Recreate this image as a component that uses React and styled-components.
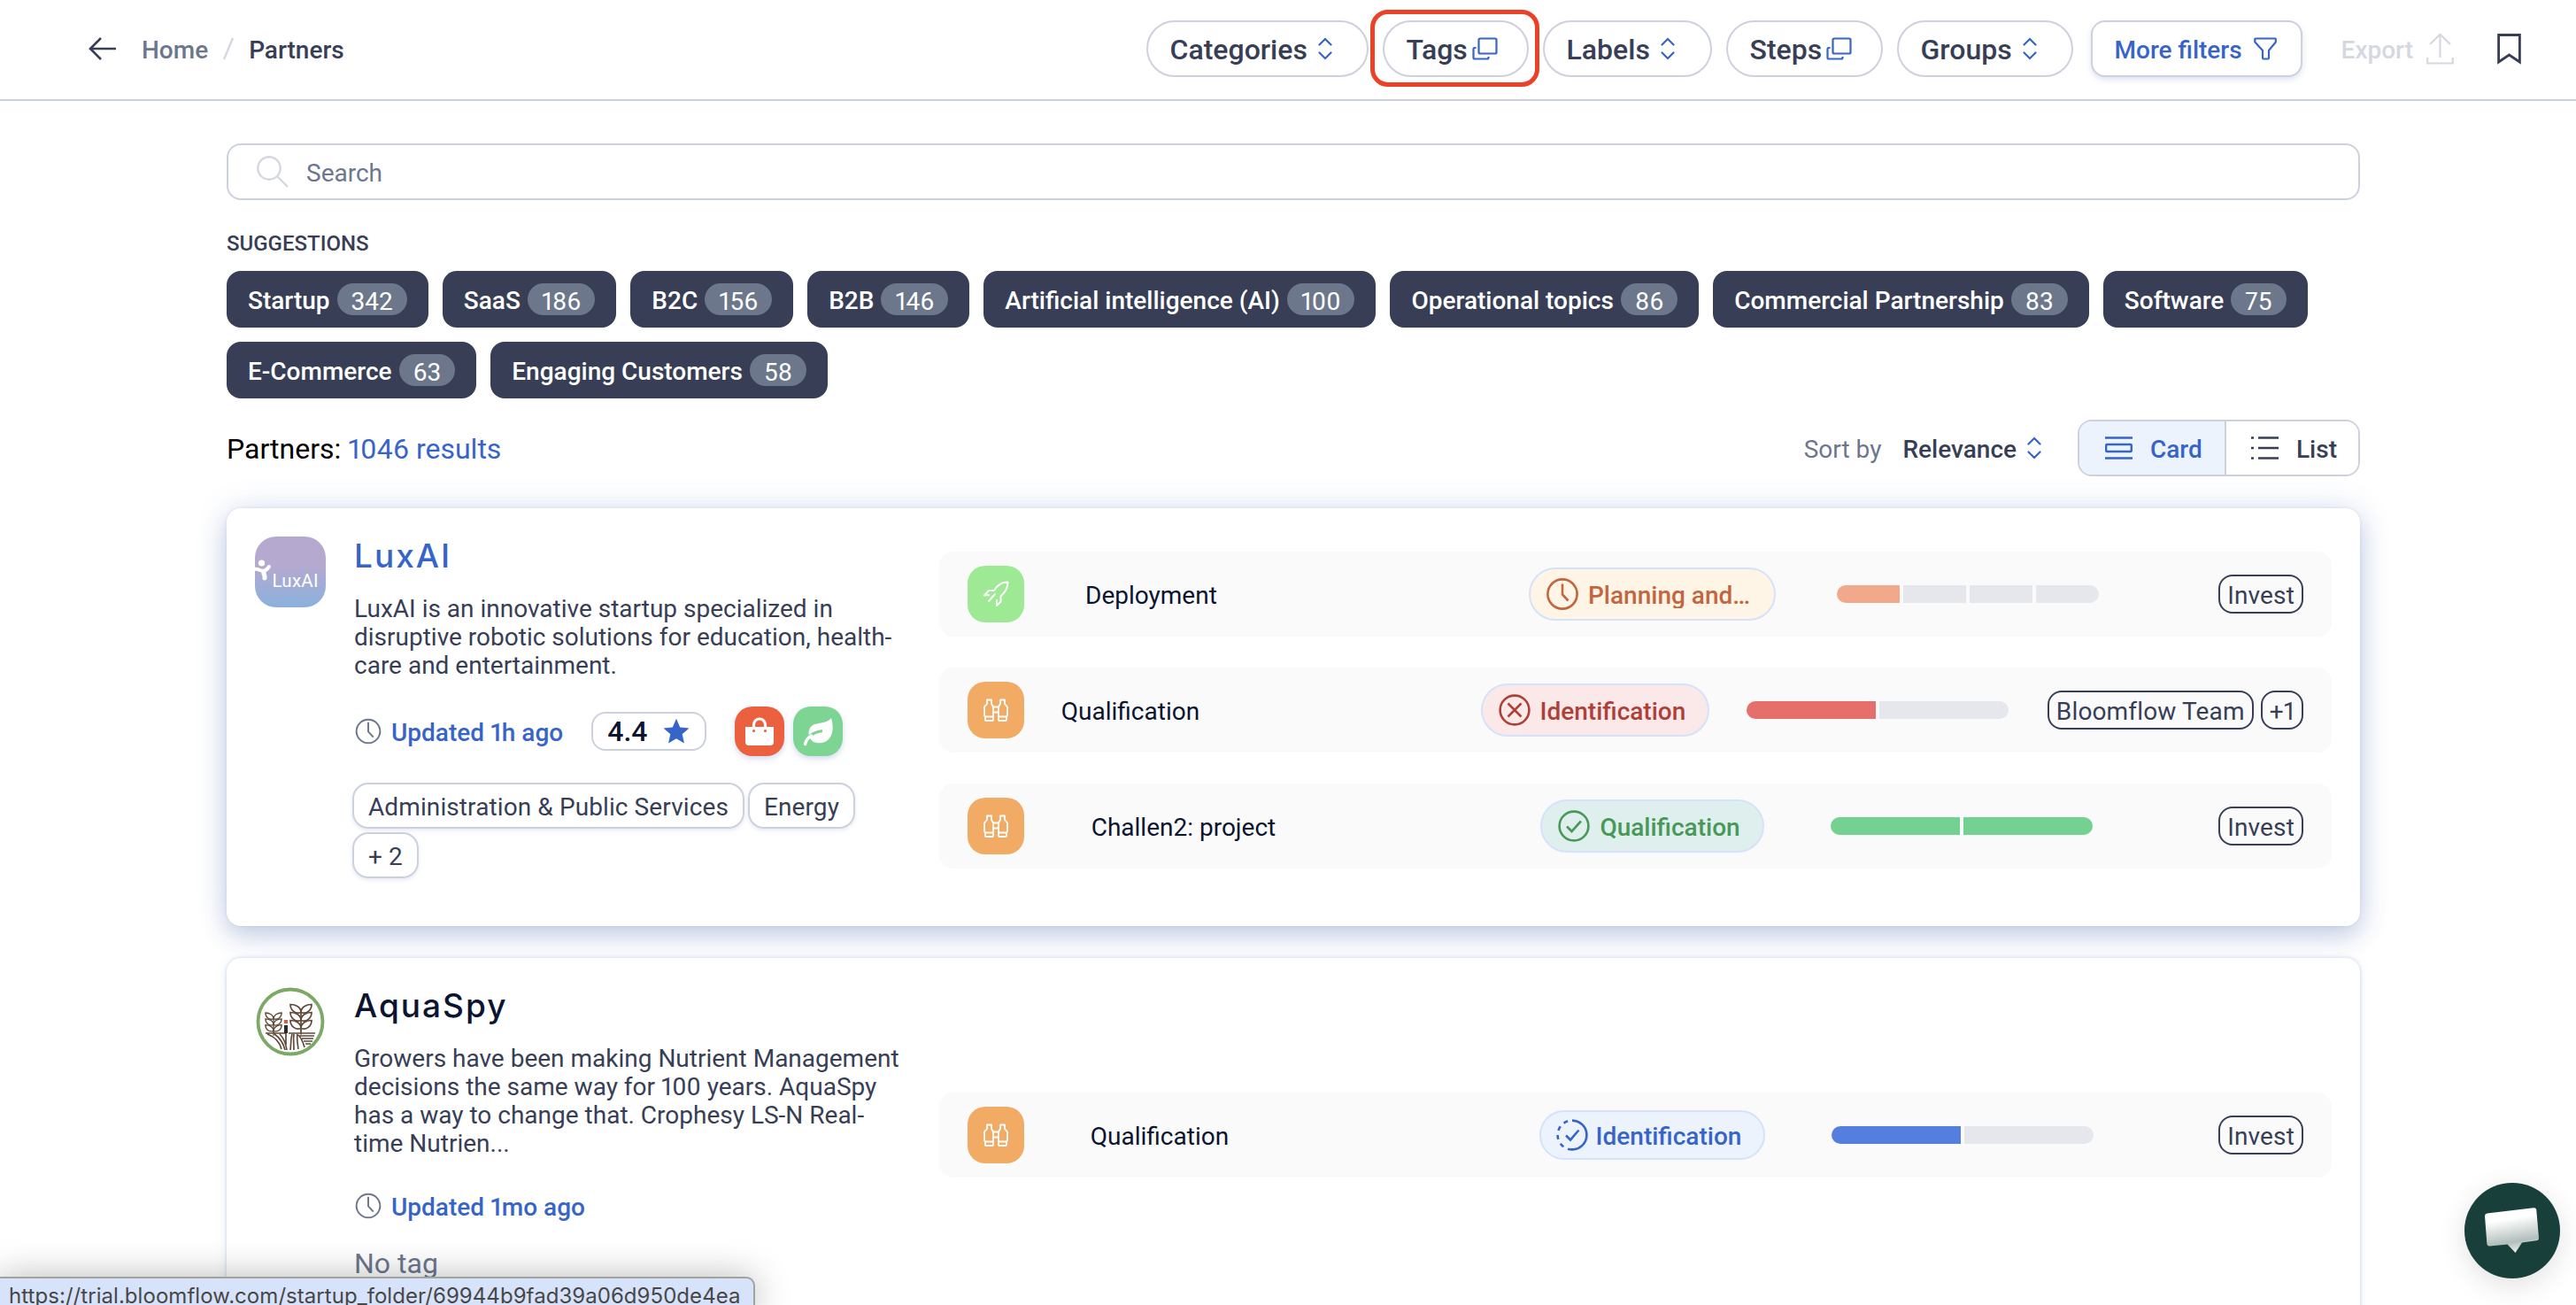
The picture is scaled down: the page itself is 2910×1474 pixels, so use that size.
import React from 'react';
import styled, { createGlobalStyle } from 'styled-components';

const colors = {
    ink: '#0b1430',
    dark: '#373e56',
    grey: '#6c778f',
    line: '#cdd1de',
    pale: '#d5d8e0',
    blue: '#3764c8',
    track: '#e6e7ec'
};

const GlobalStyle = createGlobalStyle`
    * {
        box-sizing: border-box;
    }

    body {
        margin: 0;
        background: #fff;
        color: ${colors.dark};
        font-family: Roboto, 'Liberation Sans', sans-serif;
        font-size: 28px;
        line-height: 32px;
        font-feature-settings: 'pnum';
    }

    svg {
        display: block;
        flex: none;
    }
`;

const Page = styled.div`
    position: relative;
    height: 1474px;
    overflow: hidden;
`;

/* ---------- top bar ---------- */

const TopBar = styled.header`
    display: flex;
    align-items: center;
    justify-content: space-between;
    height: 114px;
    padding: 0 62px 2px 100px;
    border-bottom: 2px solid ${colors.line};
`;

const Breadcrumb = styled.nav`
    display: flex;
    align-items: center;
    font-weight: 500;
`;

const Crumb = styled.span`
    padding-top: 4px;
    color: ${props => (props.$current ? colors.dark : colors.grey)};
`;

const Slash = styled.span`
    margin: 0 17px;
`;

const BackLink = styled.span`
    margin-right: 28px;
`;

const Filters = styled.div`
    display: flex;
    align-items: center;
`;

const FilterButton = styled.button`
    position: relative;
    display: flex;
    align-items: center;
    width: ${props => props.$width}px;
    height: 64px;
    margin-right: 16px;
    padding: 2px 0 0 25px;
    gap: ${props => (props.$popup ? 5 : 12)}px;
    border: 2px solid ${colors.line};
    border-radius: 32px;
    background: #fff;
    color: ${colors.dark};
    font: 500 32px/38px Roboto, sans-serif;

    svg {
        margin-top: -2px;
    }
`;

const Highlight = styled.span`
    position: absolute;
    top: -14px;
    left: -16px;
    width: 191px;
    height: 87px;
    border: 5px solid #eb4127;
    border-radius: 20px;
`;

const MoreFilters = styled.button`
    display: flex;
    align-items: center;
    width: 239px;
    height: 64px;
    margin: 0 44px 0 4px;
    padding: 0 0 0 25px;
    gap: 13px;
    border: 2px solid ${colors.line};
    border-radius: 16px;
    background: #fff;
    box-shadow: 0 3px 6px rgba(80, 110, 180, 0.2);
    color: ${colors.blue};
    font: 500 28px/32px Roboto, sans-serif;

    span {
        padding-top: 3px;
    }
`;

const Export = styled.div`
    display: flex;
    align-items: center;
    gap: 15px;
    margin-right: 49px;
    color: ${colors.pale};
    font-weight: 500;

    span {
        padding-top: 4px;
    }
`;

/* ---------- search and results header ---------- */

const Content = styled.main`
    width: 2410px;
    margin: 48px 0 0 256px;
`;

const SearchBox = styled.div`
    display: flex;
    align-items: center;
    height: 64px;
    padding-left: 32px;
    gap: 20px;
    border: 2px solid ${colors.line};
    border-radius: 16px;
    color: ${colors.grey};

    span {
        padding-top: 4px;
    }
`;

const SuggestionsTitle = styled.h2`
    margin: 35px 0 0;
    padding-bottom: 17px;
    font-size: 24px;
    font-weight: 500;
    line-height: 28px;
`;

const Suggestions = styled.div`
    display: flex;
    flex-wrap: wrap;
    gap: 16px;
`;

const Chip = styled.div`
    display: flex;
    align-items: center;
    height: 64px;
    padding: 0 24px;
    gap: 8px;
    border-radius: 16px;
    background: ${colors.dark};
    color: #fff;
    font-weight: 500;

    span {
        padding-top: 3px;
    }
`;

const Count = styled.b`
    height: 36px;
    padding: 5px 16px 0;
    border-radius: 18px;
    background: #6c778c;
    font-weight: 400;
`;

const ResultsBar = styled.div`
    display: flex;
    align-items: center;
    height: 64px;
    margin-top: 24px;
`;

const Total = styled.div`
    flex: 1;
    padding-top: 2px;
    color: #000;
    font-size: 32px;

    em {
        color: ${colors.blue};
        font-style: normal;
    }
`;

const SortBy = styled.div`
    display: flex;
    align-items: center;
    margin-right: 41px;
    color: ${colors.grey};

    span,
    b {
        padding-top: 4px;
    }

    b {
        margin: 0 12px 0 24px;
        color: ${colors.dark};
        font-weight: 500;
    }
`;

const Toggle = styled.div`
    display: flex;
    width: 319px;
    height: 64px;
    overflow: hidden;
    border: 2px solid ${colors.line};
    border-radius: 16px;
`;

const ToggleItem = styled.div`
    display: flex;
    align-items: center;
    width: ${props => (props.$active ? 166 : 149)}px;
    padding-left: ${props => (props.$active ? 29 : 28)}px;
    gap: 20px;
    border-right: ${props => (props.$active ? `2px solid ${colors.line}` : 'none')};
    background: ${props => (props.$active ? '#ecf3fd' : '#fff')};
    color: ${props => (props.$active ? colors.blue : colors.dark)};
    font-weight: 500;

    span {
        padding-top: 4px;
    }
`;

/* ---------- partner cards ---------- */

const Card = styled.article`
    display: flex;
    height: ${props => props.$height}px;
    margin-top: 36px;
    padding: 32px;
    border-radius: 16px;
    background: #fff;
    box-shadow: ${props =>
        props.$raised
            ? '0 12px 28px rgba(60, 90, 165, 0.24), 0 0 36px rgba(70, 100, 180, 0.15), 0 0 3px rgba(70, 100, 180, 0.15)'
            : '0 0 4px rgba(70, 100, 180, 0.28), 0 4px 16px rgba(70, 100, 180, 0.08)'};
`;

const Summary = styled.div`
    width: 629px;
    margin: 0 32px;
`;

const Name = styled.h3`
    margin: 0;
    height: 72px;
    color: ${props => (props.$active ? colors.blue : colors.ink)};
    font: 500 37px/44px Inter, Roboto, sans-serif;
    letter-spacing: 2px;
`;

const Description = styled.p`
    height: ${props => props.$lines * 32}px;
    margin: -6px 0 0;
`;

const Meta = styled.div`
    display: flex;
    align-items: center;
    height: ${props => (props.$compact ? 48 : 56)}px;
    margin-top: 30px;
`;

const Updated = styled.span`
    margin-left: 10px;
    padding-top: 3px;
    color: ${colors.blue};
    font-weight: 500;
`;

const Rating = styled.div`
    display: flex;
    align-items: center;
    width: 130px;
    height: 44px;
    margin: 0 32px;
    padding-left: 16px;
    gap: 17px;
    border: 2px solid ${colors.line};
    border-radius: 16px;
    color: ${colors.ink};
    font-size: 32px;
    font-weight: 500;
`;

const Badge = styled.div`
    display: flex;
    align-items: center;
    justify-content: center;
    width: 56px;
    height: 56px;
    margin-right: 10px;
    border-radius: 20px;
    background: ${props => props.$color};
    box-shadow: 0 3px 6px rgba(80, 110, 180, 0.25);
`;

const Tags = styled.div`
    display: flex;
    flex-wrap: wrap;
    gap: 4px;
    margin: 30px 0 0 -2px;
`;

const Tag = styled.span`
    height: 52px;
    padding: 10px 16px 0;
    border: 2px solid ${colors.line};
    border-radius: 18px;
    box-shadow: 0 2px 4px rgba(80, 110, 180, 0.15);
    letter-spacing: 0.1px;
`;

const NoTag = styled.div`
    margin-top: 22px;
    color: ${colors.grey};
    font-size: 32px;
    line-height: 38px;
`;

const Workflows = styled.div`
    display: flex;
    flex: 1;
    flex-direction: column;
    gap: 35px;
    padding-top: ${props => props.$offset}px;
`;

const Workflow = styled.div`
    display: flex;
    align-items: center;
    justify-content: space-between;
    height: 96px;
    padding: 0 32px;
    border-radius: 16px;
    background: #fafafb;
`;

const WorkflowIcon = styled.div`
    display: flex;
    align-items: center;
    justify-content: center;
    width: 64px;
    height: 64px;
    border-radius: 20px;
    background: ${props => props.$color};
`;

const WorkflowName = styled.div`
    width: 432px;
    padding-top: 4px;
    color: ${colors.ink};
`;

const tones = {
    warning: { text: '#c3653e', back: '#fef5e7', bar: '#f2a98b' },
    danger: { text: '#ae4038', back: '#fbe9ea', bar: '#e5706b' },
    success: { text: '#489858', back: '#deefee', bar: '#73d292' },
    info: { text: '#3764c8', back: '#ecf3fd', bar: '#557fdf' }
};

const Status = styled.div`
    display: flex;
    align-items: center;
    height: ${props => (props.$tone === 'info' ? 56 : 60)}px;
    padding: 0 25px 0 ${props => (props.$tone === 'info' ? 17 : 18)}px;
    gap: ${props => (props.$tone === 'info' ? 9 : 11)}px;
    border: 2px solid #d5e2fc;
    border-radius: 30px;
    background: ${props => tones[props.$tone].back};
    color: ${props => tones[props.$tone].text};
    font-weight: 500;

    span {
        max-width: 185px;
        margin-top: 4px;
        overflow: ${props => (props.$tone === 'warning' ? 'hidden' : 'visible')};
        line-height: 28px;
        text-overflow: ellipsis;
        white-space: nowrap;
    }
`;

const Bar = styled.div`
    display: flex;
    width: 296px;
    height: 20px;
    gap: 4px;
    overflow: hidden;
    border-radius: 10px;
`;

const Segment = styled.i`
    flex: 1;
    background: ${props => props.$fill || colors.track};
`;

const Owners = styled.div`
    display: flex;
    justify-content: flex-end;
    min-width: 160px;
    margin-left: 2px;
    gap: 8px;
`;

const Owner = styled.span`
    height: 44px;
    padding: 6px 8px 0;
    border: 2px solid ${colors.dark};
    border-radius: 16px;
    letter-spacing: 0.15px;
`;

/* ---------- overlays ---------- */

const StatusUrl = styled.div`
    position: absolute;
    left: -2px;
    bottom: -10px;
    width: 855px;
    height: 42px;
    padding: 5px 0 0 10px;
    border: 2px solid #a2a39f;
    border-radius: 0 10px 0 0;
    background: #d7e2fb;
    box-shadow: 0 0 40px rgba(0, 0, 0, 0.28);
    color: #474747;
    font: 400 24px/30px Inter, sans-serif;
    letter-spacing: 0.05px;
    white-space: nowrap;
`;

const ChatButton = styled.div`
    position: absolute;
    right: 18px;
    bottom: 30px;
    display: flex;
    align-items: center;
    justify-content: center;
    width: 108px;
    height: 108px;
    border-radius: 50%;
    background: #183f39;
    box-shadow: 0 8px 32px rgba(0, 0, 0, 0.12);
`;

/* ---------- icons ---------- */

const ArrowLeft = () => (
    <svg width="32" height="28" viewBox="0 0 32 28" fill="none" stroke={colors.dark} strokeWidth="2.6">
        <path d="M14 2L2 14l12 12M2 14h29" />
    </svg>
);

const Chevrons = () => (
    <svg width="16" height="26" viewBox="0 0 16 26" fill="none" stroke={colors.blue} strokeWidth="2.2">
        <path d="M1.5 8.5L8 2l6.5 6.5M1.5 17.5L8 24l6.5-6.5" strokeLinecap="round" />
    </svg>
);

const Popup = () => (
    <svg width="29" height="26" viewBox="0 0 29 26" fill="none" stroke={colors.blue} strokeWidth="2.2">
        <rect x="7.5" y="1.5" width="20" height="17" rx="1.5" />
        <path d="M4.5 12H3a1.5 1.5 0 0 0-1.5 1.5V23a1.5 1.5 0 0 0 1.5 1.5h14a1.5 1.5 0 0 0 1.5-1.5v-1" />
    </svg>
);

const Funnel = () => (
    <svg width="26" height="26" viewBox="0 0 26 26" fill="none" stroke={colors.blue} strokeWidth="2.2" strokeLinejoin="round">
        <path d="M2 1.5h22a.8.8 0 0 1 .8 1v3L17 15v8.5a1 1 0 0 1-1 1h-5a1 1 0 0 1-1-1V15L1.3 5.5v-3a.8.8 0 0 1 .7-1z" />
    </svg>
);

const Upload = () => (
    <svg width="31" height="36" viewBox="0 0 31 36" fill="none" stroke={colors.pale} strokeWidth="2.2">
        <path d="M15.5 28V2M4 13L15.5 1.800 27 13M1.2 28v6.5h28.6V28" />
    </svg>
);

const Bookmark = () => (
    <svg width="27" height="36" viewBox="0 0 27 36" fill="none" stroke={colors.dark} strokeWidth="2.8">
        <path d="M1.6 2.5h23.8V33L13.5 25 1.6 33z" />
    </svg>
);

const SearchIcon = () => (
    <svg width="36" height="36" viewBox="0 0 36 36" fill="none" stroke={colors.pale} strokeWidth="2.4">
        <circle cx="14" cy="14" r="12.7" />
        <path d="M23 23l12 12" />
    </svg>
);

const CardIcon = () => (
    <svg width="31" height="26" viewBox="0 0 31 26" fill="none" stroke="currentColor" strokeWidth="2.4">
        <path d="M0 1.5h31M0 24.5h31" />
        <rect x="1.2" y="9" width="28.6" height="8" rx="1" />
    </svg>
);

const ListIcon = () => (
    <svg width="31" height="26" viewBox="0 0 31 26" fill="none" stroke="currentColor" strokeWidth="2.4">
        <path d="M8 1.5h23M8 13h23M8 24.5h23M0 1.5h3M0 13h3M0 24.5h3" />
    </svg>
);

const Clock = ({ size, color, width }) => (
    <svg width={size} height={size} viewBox="0 0 36 36" fill="none" stroke={color} strokeWidth={width}>
        <circle cx="18" cy="18" r={size === 36 ? 16.6 : 15} />
        <path d="M18 6.5v12l6.5 7" />
    </svg>
);

const CrossCircle = () => (
    <svg width="36" height="36" viewBox="0 0 36 36" fill="none" stroke="currentColor" strokeWidth="2.6">
        <circle cx="18" cy="18" r="16.4" />
        <path d="M10.5 10.5l15 15M25.5 10.5l-15 15" />
    </svg>
);

const CheckCircle = () => (
    <svg width="36" height="36" viewBox="0 0 36 36" fill="none" stroke="currentColor" strokeWidth="2.6">
        <circle cx="18" cy="18" r="16.4" />
        <path d="M10 18.5l5.5 5.5L26 12.5" />
    </svg>
);

const DashedCheck = () => (
    <svg width="36" height="36" viewBox="0 0 36 36" fill="none" stroke="currentColor" strokeWidth="2.6">
        <path d="M18 1.6a16.4 16.4 0 0 1 0 32.8" />
        <path d="M18 1.6a16.4 16.4 0 0 0 0 32.8" strokeDasharray="5 5.3" strokeDashoffset="-5" />
        <path d="M11 18.5l5 5L25.5 12.5" />
    </svg>
);

const Star = () => (
    <svg width="30" height="30" viewBox="0 0 30 30" fill={colors.blue}>
        <path d="M15 .8l4.2 9.6 10.3 1-7.8 6.9 2.3 10.2-9-5.3-9 5.3 2.3-10.2L.5 11.4l10.3-1z" />
    </svg>
);

const Bag = () => (
    <svg width="34" height="34" viewBox="0 0 34 34">
        <path d="M10.5 12V9.5a6.5 6.5 0 0 1 13 0V12" fill="none" stroke="#fff" strokeWidth="3.2" />
        <path d="M1 12h32v17a4 4 0 0 1-4 4H5a4 4 0 0 1-4-4z" fill="#fff" />
        <circle cx="10.5" cy="16.5" r="1.6" fill="#eb6140" />
        <circle cx="23.5" cy="16.5" r="1.6" fill="#eb6140" />
    </svg>
);

const Leaf = () => (
    <svg width="34" height="34" viewBox="0 0 34 34">
        <path d="M32 2c3 10 2 19-3 24-4 4.500-11 5.500-17 3C5 25 5 15 10 11c5-4.500 17-2 22-9z" fill="#fff" />
        <path d="M1 32C4 24 11 18 22 16.5" fill="none" stroke="#7dd493" strokeWidth="3" />
        <path d="M2.5 31.5c1-4 3.5-7.500 7-9.500" fill="none" stroke="#fff" strokeWidth="3.4" strokeLinecap="round" />
    </svg>
);

const Rocket = () => (
    <svg width="30" height="30" viewBox="0 0 30 30" fill="none" stroke="#fff" strokeWidth="2" strokeLinejoin="round">
        <path d="M13 11C16.5 5 21 1.5 28.5 1.5 28.5 9 25 13.5 20.5 17.5v6L16 28v-7M13 11H7l-5 5.5 5.5-.5M7.5 16l-1 .8M14.5 14.5L6.5 23.5" />
    </svg>
);

const Binoculars = () => (
    <svg width="30" height="26" viewBox="0 0 30 26" fill="none" stroke="#fff" strokeWidth="1.8" strokeLinejoin="round">
        <path d="M5 1.5h5v4.5l2 3.5V24a1 1 0 0 1-1 1H4a1 1 0 0 1-1-1v-3.5L2 19V9.5l3-3.5zM20 1.5h5V6l3 3.5V19l-1 1.5V24a1 1 0 0 1-1 1h-7a1 1 0 0 1-1-1V9.5L20 6zM3 20.5h9M18 20.5h9M12 9.5h6M12 15.5h6" />
    </svg>
);

const LuxLogo = () => (
    <svg width="80" height="80" viewBox="0 0 80 80">
        <defs>
            <linearGradient id="lux" x1="0" y1="0" x2="0" y2="1">
                <stop offset="0.4" stopColor="#b5a9cf" />
                <stop offset="1" stopColor="#8ab1dd" />
            </linearGradient>
            <clipPath id="luxClip">
                <rect width="80" height="80" rx="24" />
            </clipPath>
        </defs>
        <g clipPath="url(#luxClip)">
            <rect width="80" height="80" fill="url(#lux)" />
            <circle cx="7.5" cy="30" r="3.6" fill="#fff" />
            <path d="M-1 37c5-1 7 2 10 2 3 0 4.500-1.500 7-5" fill="none" stroke="#fff" strokeWidth="4" strokeLinecap="round" />
            <path d="M10 39c-1 4 2 5 1 8" fill="none" stroke="#fff" strokeWidth="5" strokeLinecap="round" />
            <text x="19.5" y="57" fill="#fff" fontFamily="Roboto" fontWeight="400" fontSize="20.5" textLength="52">
                LuxAI
            </text>
        </g>
    </svg>
);

const Ear = ({ x, y, scale }) => (
    <g transform={`translate(${x} ${y}) scale(${scale})`}>
        {[0, 9, 18].map(top => (
            <path
                key={top}
                d={`M0 ${top + 9}C-6 ${top + 11}-12 ${top + 7}-12 ${top}-6 ${top} 0 ${top + 3} 0 ${top + 9}C0 ${top + 3} 6 ${top} 12 ${top}c0 7-6 11-12 9z`}
            />
        ))}
        <path d="M0 8v26" />
    </g>
);

const AquaLogo = () => (
    <svg width="80" height="80" viewBox="0 0 80 80" fill="none" stroke="#5f4a3a" strokeWidth="1.7">
        <circle cx="40" cy="40" r="36.5" stroke="#7caa66" strokeWidth="3.8" fill="#fff" />
        <Ear x="52" y="20.5" scale="1" />
        <Ear x="21" y="30" scale="0.76" />
        <path d="M12 53h23M38 53h30M14 54c8 3 14 9 16 17M22 54c6 4 10 10 12 18M28 54c5 5 7 11 8 18M40 72c1-7 0-12 2-18M44 72c0-8-1-12 0-18M49 71c-1-8-2-12-1-17M56 69c-2-7-4-11-7-14M50 56h17M53 59h13M55 62h10M57 65h6" />
        <path d="M35 44v9" stroke="#2d2a28" strokeWidth="4" />
        <path d="M35 53v13" />
        <path d="M35 38v4" stroke="#e8583c" strokeWidth="4" />
    </svg>
);

const ChatIcon = () => (
    <svg width="64" height="54" viewBox="0 0 64 54">
        <defs>
            <linearGradient id="chat" x1="0.4" y1="0" x2="0.6" y2="1">
                <stop offset="0.25" stopColor="#fff" />
                <stop offset="0.75" stopColor="#b3bfbc" />
                <stop offset="1" stopColor="#eef1f0" />
            </linearGradient>
        </defs>
        <path
            d="M3.5 7.5L56 1.2a3 3 0 0 1 3.3 2.8L62 35a3 3 0 0 1-2.7 3.2L43 40.5 35.5 52 26.5 42.5 6.5 44.5A3 3 0 0 1 3.4 42L1 10.5a3 3 0 0 1 2.5-3z"
            fill="url(#chat)"
        />
    </svg>
);

/* ---------- data ---------- */

const filters = [
    { label: 'Categories', width: 251 },
    { label: 'Tags', width: 165, popup: true, highlighted: true },
    { label: 'Labels', width: 191 },
    { label: 'Steps', width: 177, popup: true },
    { label: 'Groups', width: 199 }
];

const suggestions = [
    ['Startup', 342],
    ['SaaS', 186],
    ['B2C', 156],
    ['B2B', 146],
    ['Artificial intelligence (AI)', 100],
    ['Operational topics', 86],
    ['Commercial Partnership', 83],
    ['Software', 75],
    ['E-Commerce', 63],
    ['Engaging Customers', 58]
];

const luxWorkflows = [
    { name: 'Deployment', rocket: true, status: 'Planning and validation', tone: 'warning', done: 1, steps: 4, owners: ['Invest'] },
    { name: 'Qualification', status: 'Identification', tone: 'danger', done: 1, steps: 2, owners: ['Bloomflow Team', '+1'] },
    { name: 'Challen2: project', status: 'Qualification', tone: 'success', done: 2, steps: 2, owners: ['Invest'] }
];

const aquaWorkflows = [
    { name: 'Qualification', status: 'Identification', tone: 'info', done: 1, steps: 2, owners: ['Invest'] }
];

const statusIcons = {
    warning: <Clock size={36} color="currentColor" width={2.6} />,
    danger: <CrossCircle />,
    success: <CheckCircle />,
    info: <DashedCheck />
};

const WorkflowList = ({ items, offset }) => (
    <Workflows $offset={offset}>
        {items.map(item => (
            <Workflow key={item.name}>
                <WorkflowIcon $color={item.rocket ? '#9de994' : '#f1ab65'}>
                    {item.rocket ? <Rocket /> : <Binoculars />}
                </WorkflowIcon>
                <WorkflowName>{item.name}</WorkflowName>
                <Status $tone={item.tone}>
                    {statusIcons[item.tone]}
                    <span>{item.status}</span>
                </Status>
                <Bar>
                    {Array.from({ length: item.steps }, (_, i) => (
                        <Segment key={i} $fill={i < item.done ? tones[item.tone].bar : undefined} />
                    ))}
                </Bar>
                <Owners>
                    {item.owners.map(owner => (
                        <Owner key={owner}>{owner}</Owner>
                    ))}
                </Owners>
            </Workflow>
        ))}
    </Workflows>
);

const App = () => (
    <Page>
        <GlobalStyle />
        <TopBar>
            <Breadcrumb>
                <BackLink>
                    <ArrowLeft />
                </BackLink>
                <Crumb>Home</Crumb>
                <Slash>
                    <svg width="12" height="26" viewBox="0 0 12 26" stroke={colors.pale} strokeWidth="2.4">
                        <path d="M11 1L1 25" />
                    </svg>
                </Slash>
                <Crumb $current>Partners</Crumb>
            </Breadcrumb>
            <Filters>
                {filters.map(({ label, width, popup, highlighted }) => (
                    <FilterButton key={label} $width={width} $popup={popup}>
                        {label}
                        {popup ? <Popup /> : <Chevrons />}
                        {highlighted && <Highlight />}
                    </FilterButton>
                ))}
                <MoreFilters>
                    <span>More filters</span>
                    <Funnel />
                </MoreFilters>
                <Export>
                    <span>Export</span>
                    <Upload />
                </Export>
                <Bookmark />
            </Filters>
        </TopBar>

        <Content>
            <SearchBox>
                <SearchIcon />
                <span>Search</span>
            </SearchBox>
            <SuggestionsTitle>SUGGESTIONS</SuggestionsTitle>
            <Suggestions>
                {suggestions.map(([label, count]) => (
                    <Chip key={label}>
                        <span>{label}</span>
                        <Count>{count}</Count>
                    </Chip>
                ))}
            </Suggestions>

            <ResultsBar>
                <Total>
                    Partners: <em>1046 results</em>
                </Total>
                <SortBy>
                    <span>Sort by</span>
                    <b>Relevance</b>
                    <Chevrons />
                </SortBy>
                <Toggle>
                    <ToggleItem $active>
                        <CardIcon />
                        <span>Card</span>
                    </ToggleItem>
                    <ToggleItem>
                        <ListIcon />
                        <span>List</span>
                    </ToggleItem>
                </Toggle>
            </ResultsBar>

            <Card $height={472} $raised>
                <LuxLogo />
                <Summary>
                    <Name $active>LuxAI</Name>
                    <Description $lines={3}>
                        LuxAI is an innovative startup specialized in disruptive robotic solutions for education,
                        health-care and entertainment.
                    </Description>
                    <Meta>
                        <Clock size={32} color={colors.grey} width={2.2} />
                        <Updated>Updated 1h ago</Updated>
                        <Rating>
                            4.4
                            <Star />
                        </Rating>
                        <Badge $color="#eb6140">
                            <Bag />
                        </Badge>
                        <Badge $color="#7dd493">
                            <Leaf />
                        </Badge>
                    </Meta>
                    <Tags>
                        <Tag>Administration &amp; Public Services</Tag>
                        <Tag>Energy</Tag>
                        <Tag>+ 2</Tag>
                    </Tags>
                </Summary>
                <WorkflowList items={luxWorkflows} offset={17} />
            </Card>

            <Card $height={460}>
                <AquaLogo />
                <Summary>
                    <Name>AquaSpy</Name>
                    <Description $lines={4}>
                        Growers have been making Nutrient Management decisions the same way for 100 years. AquaSpy
                        has a way to change that. Crophesy LS-N Real-time Nutrien...
                    </Description>
                    <Meta $compact>
                        <Clock size={32} color={colors.grey} width={2.2} />
                        <Updated>Updated 1mo ago</Updated>
                    </Meta>
                    <NoTag>No tag</NoTag>
                </Summary>
                <WorkflowList items={aquaWorkflows} offset={120} />
            </Card>
        </Content>

        <StatusUrl>https://trial.bloomflow.com/startup_folder/69944b9fad39a06d950de4ea</StatusUrl>
        <ChatButton>
            <ChatIcon />
        </ChatButton>
    </Page>
);

export default App;
